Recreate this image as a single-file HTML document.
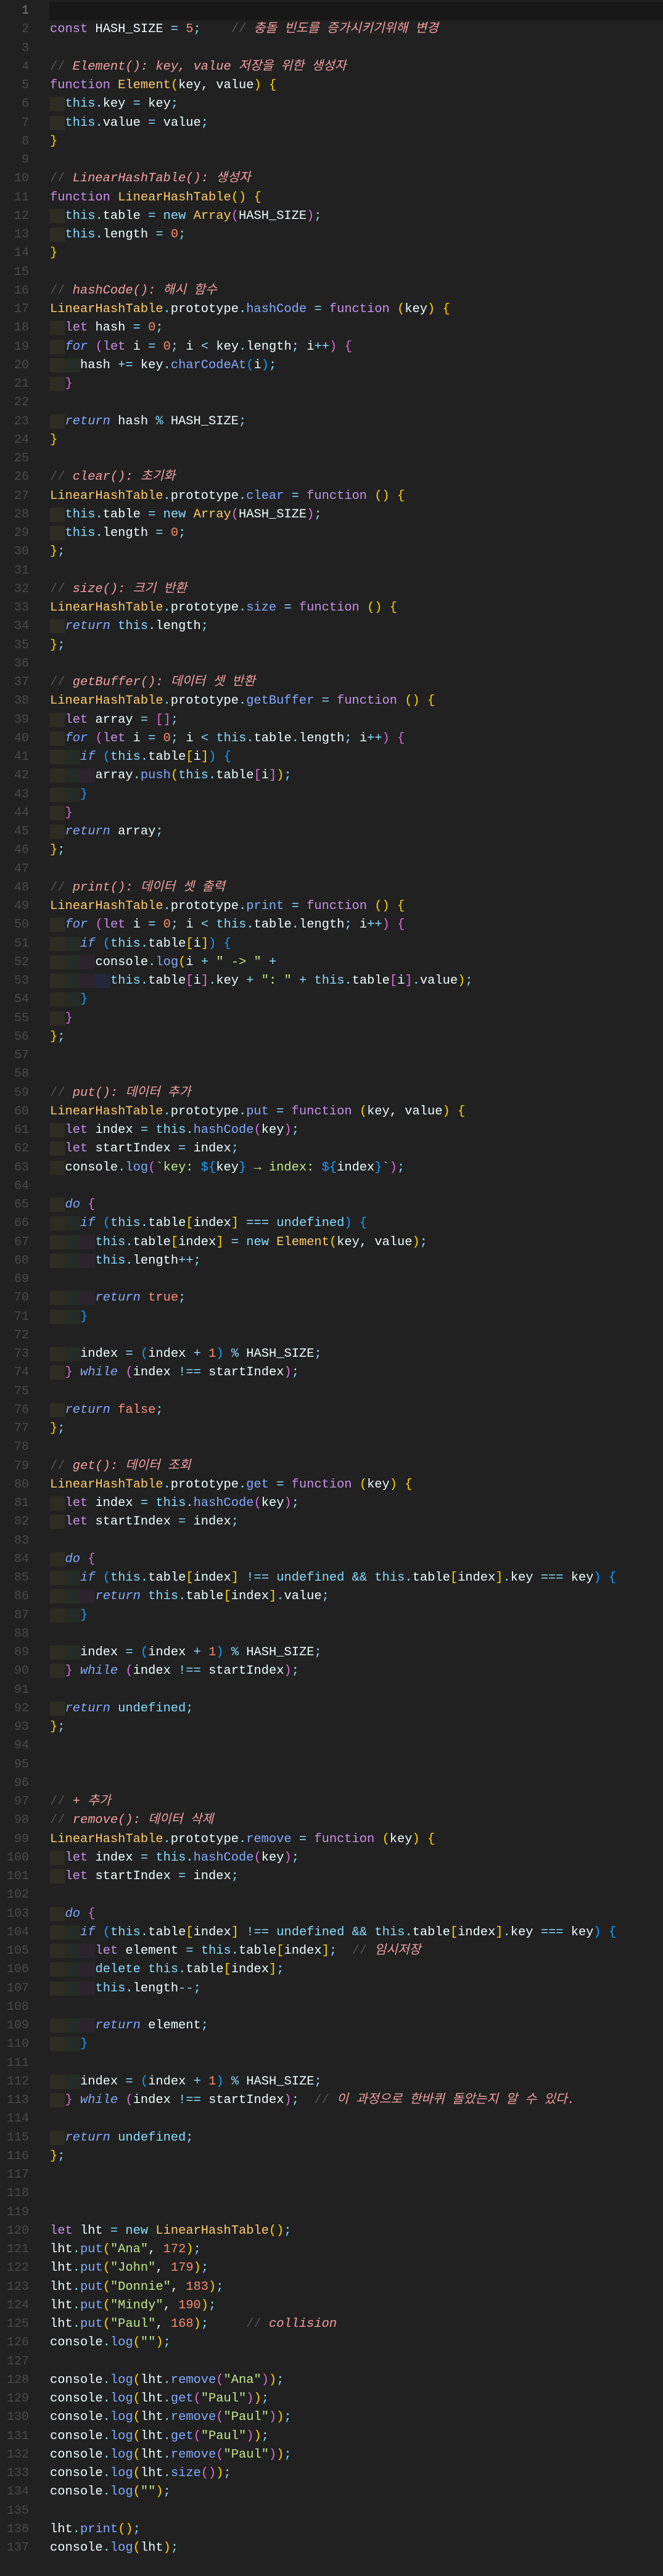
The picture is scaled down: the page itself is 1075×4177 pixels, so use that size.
<!DOCTYPE html>
<html><head><meta charset="utf-8">
<style>
html,body{margin:0;padding:0;background:#212121;}
body{width:1075px;height:4177px;overflow:hidden;position:relative;font-family:"Liberation Mono","Noto Sans CJK KR","NanumGothic",monospace;font-size:20.4px;color:#eeffff;}
#hl{position:absolute;left:80px;top:3px;width:995px;height:30px;background:#181818;}
#code{position:absolute;left:0;top:3px;width:1075px;}
.ln{height:30.25px;line-height:30.25px;position:relative;white-space:pre;}
.n{position:absolute;left:0;width:47px;text-align:right;color:#4a4a4a;font-size:20px;}
.n.a{color:#7a7a7a;}
.c{position:absolute;left:81px;}
.i1{background:#2d2d23;}.i2{background:#252c25;}.i3{background:#2c242c;}.i4{background:#23283a;}
.kw{color:#c792ea}.cy{color:#89ddff}.ct{color:#82aaff;font-style:italic}
.ty{color:#ffcb6b}.fn{color:#82aaff}.st{color:#c3e88d}.nu{color:#f78c6c}
.cm1{color:#545454}.cm{color:#f4a1a1;font-style:italic}
.b0{color:#ffd700}.b1{color:#da70d6}.b2{color:#179fff}.tr{color:#ff8f7a}
</style></head><body>
<div id="hl"></div>
<pre id="src" style="display:none">
const HASH_SIZE = 5;    // 충돌 빈도를 증가시키기위해 변경

// Element(): key, value 저장을 위한 생성자
function Element(key, value) {
  this.key = key;
  this.value = value;
}

// LinearHashTable(): 생성자
function LinearHashTable() {
  this.table = new Array(HASH_SIZE);
  this.length = 0;
}

// hashCode(): 해시 함수
LinearHashTable.prototype.hashCode = function (key) {
  let hash = 0;
  for (let i = 0; i &lt; key.length; i++) {
    hash += key.charCodeAt(i);
  }

  return hash % HASH_SIZE;
}

// clear(): 초기화
LinearHashTable.prototype.clear = function () {
  this.table = new Array(HASH_SIZE);
  this.length = 0;
};

// size(): 크기 반환
LinearHashTable.prototype.size = function () {
  return this.length;
};

// getBuffer(): 데이터 셋 반환
LinearHashTable.prototype.getBuffer = function () {
  let array = [];
  for (let i = 0; i &lt; this.table.length; i++) {
    if (this.table[i]) {
      array.push(this.table[i]);
    }
  }
  return array;
};

// print(): 데이터 셋 출력
LinearHashTable.prototype.print = function () {
  for (let i = 0; i &lt; this.table.length; i++) {
    if (this.table[i]) {
      console.log(i + " -&gt; " +
        this.table[i].key + ": " + this.table[i].value);
    }
  }
};


// put(): 데이터 추가
LinearHashTable.prototype.put = function (key, value) {
  let index = this.hashCode(key);
  let startIndex = index;
  console.log(`key: ${key} → index: ${index}`);

  do {
    if (this.table[index] === undefined) {
      this.table[index] = new Element(key, value);
      this.length++;

      return true;
    }

    index = (index + 1) % HASH_SIZE;
  } while (index !== startIndex);

  return false;
};

// get(): 데이터 조회
LinearHashTable.prototype.get = function (key) {
  let index = this.hashCode(key);
  let startIndex = index;

  do {
    if (this.table[index] !== undefined &amp;&amp; this.table[index].key === key) {
      return this.table[index].value;
    }

    index = (index + 1) % HASH_SIZE;
  } while (index !== startIndex);

  return undefined;
};



// + 추가
// remove(): 데이터 삭제
LinearHashTable.prototype.remove = function (key) {
  let index = this.hashCode(key);
  let startIndex = index;

  do {
    if (this.table[index] !== undefined &amp;&amp; this.table[index].key === key) {
      let element = this.table[index];  // 임시저장
      delete this.table[index];
      this.length--;

      return element;
    }

    index = (index + 1) % HASH_SIZE;
  } while (index !== startIndex);  // 이 과정으로 한바퀴 돌았는지 알 수 있다.

  return undefined;
};



let lht = new LinearHashTable();
lht.put("Ana", 172);
lht.put("John", 179);
lht.put("Donnie", 183);
lht.put("Mindy", 190);
lht.put("Paul", 168);     // collision
console.log("");

console.log(lht.remove("Ana"));
console.log(lht.get("Paul"));
console.log(lht.remove("Paul"));
console.log(lht.get("Paul"));
console.log(lht.remove("Paul"));
console.log(lht.size());
console.log("");

lht.print();
console.log(lht);</pre>
<div id="code"></div>
<script>
(function(){
var src=document.getElementById('src').textContent.replace(/^\n/,'');
var lines=src.split('\n');
lines.unshift('');
function esc(s){return s.replace(/&/g,'&amp;').replace(/</g,'&lt;').replace(/>/g,'&gt;');}
function sp(c,t){return '<span class="'+c+'">'+esc(t)+'</span>';}
var KW={'const':1,'let':1,'function':1,'var':1};
var CY={'this':1,'new':1,'delete':1,'undefined':1};
var CT={'for':1,'if':1,'return':1,'do':1,'while':1};
var depth=0;
var out='';
for(var li=0;li<lines.length;li++){
  var L=lines[li];
  var m=L.match(/^ */)[0].length;
  var h='';
  if(L.trim().length){
    for(var k=0;k<Math.floor(m/2);k++){h+='<span class="i'+((k%4)+1)+'">  </span>';}
    if(m%2)h+=' ';
  }
  var rest=L.slice(m);
  var re=/(\/\/.*)|("[^"]*")|(`[^`]*`)|(\d+)|([A-Za-z_$][\w$]*)|(\s+)|(.)/g, t, prev='';
  while((t=re.exec(rest))){
    var s=t[0];
    if(t[1]){h+=sp('cm1','//')+sp('cm',s.slice(2));}
    else if(t[2]){h+=sp('st',s);}
    else if(t[3]){
      var parts=s.split(/(\$\{[^}]*\})/);
      parts.forEach(function(p){
        if(/^\$\{/.test(p)){h+=sp('b2','${')+esc(p.slice(2,-1))+sp('b2','}');}
        else h+=sp('st',p);
      });
    }
    else if(t[4]){h+=sp('nu',s);}
    else if(t[5]){
      var after=rest.slice(re.lastIndex);
      var cls='';
      if(KW[s])cls='kw';else if(CY[s])cls='cy';else if(CT[s])cls='ct';
      else if(s==='true'||s==='false')cls='tr';
      else if(prev==='function')cls='ty';
      else if(/^[A-Z][a-z]/.test(s))cls='ty';
      else if(/^\s*\(/.test(after))cls='fn';
      else if(/^\s*=\s*function/.test(after))cls='fn';
      h+=cls?sp(cls,s):esc(s);
      prev=s;continue;
    }
    else if(t[6]){h+=s;continue;}
    else{
      if('([{'.indexOf(s)>=0){h+=sp('b'+(depth%3),s);depth++;}
      else if(')]}'.indexOf(s)>=0){depth=Math.max(0,depth-1);h+=sp('b'+(depth%3),s);}
      else if(s===',')h+=s;
      else h+=sp('cy',s);
    }
    prev=s;
  }
  out+='<div class="ln"><span class="n'+(li===0?' a':'')+'">'+(li+1)+'</span><span class="c">'+h+'</span></div>';
}
document.getElementById('code').innerHTML=out;
})();
</script>
</body></html>
